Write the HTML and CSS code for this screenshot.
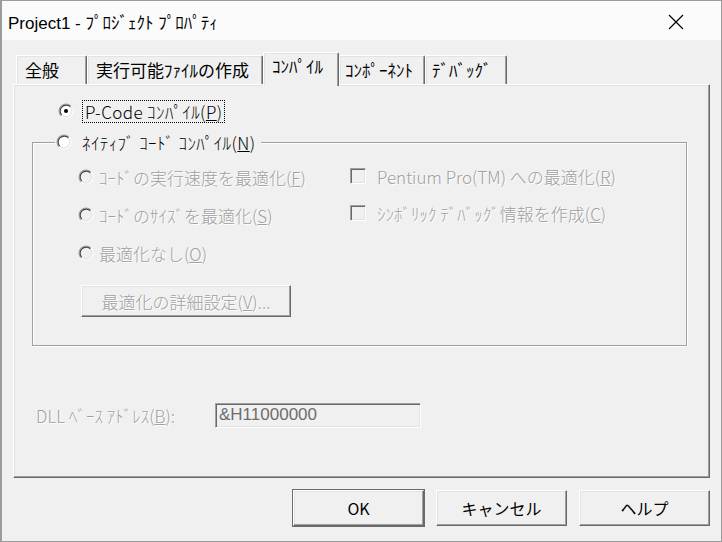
FILE: index.html
```html
<!DOCTYPE html>
<html lang="ja">

<head>
  <meta charset="UTF-8">
  <title>Project1 - ﾌﾟﾛｼﾞｪｸﾄ ﾌﾟﾛﾊﾟﾃｨ</title>
  <link rel="stylesheet" href="styles.css">
</head>

<body>
  <svg class="defs" width="0" height="0">
    <symbol id="radio-ring" viewBox="0 0 16 16">
      <path d="M3.05 12.95 A7 7 0 0 1 12.95 3.05" stroke="#a0a0a0" stroke-width="1.1" fill="none" />
      <path d="M12.95 3.05 A7 7 0 0 1 3.05 12.95" stroke="#fff" stroke-width="1.1" fill="none" />
      <path d="M3.76 12.24 A6 6 0 0 1 12.24 3.76" stroke="#404040" stroke-width="1.1" fill="none" />
      <path d="M12.24 3.76 A6 6 0 0 1 3.76 12.24" stroke="#e3e3e3" stroke-width="1.1" fill="none" />
    </symbol>
  </svg>

  <div class="window">
    <div class="titlebar">
      <span class="title">Project1 - ﾌﾟﾛｼﾞｪｸﾄ ﾌﾟﾛﾊﾟﾃｨ</span>
      <span class="close">
        <svg width="16" height="16" viewBox="0 0 16 16">
          <path d="M1 1 L15 15 M15 1 L1 15" stroke="#000" stroke-width="1.2" fill="none" />
        </svg>
      </span>
    </div>

    <div class="client">
      <div class="tabs">
        <div class="tab tab-general">全般</div>
        <div class="tab tab-make">実行可能ﾌｧｲﾙの作成</div>
        <div class="tab tab-compile active">ｺﾝﾊﾟｲﾙ</div>
        <div class="tab tab-component">ｺﾝﾎﾟｰﾈﾝﾄ</div>
        <div class="tab tab-debug">ﾃﾞﾊﾞｯｸﾞ</div>
      </div>

      <div class="panel">
        <div class="opt pcode">
          <svg class="radio" viewBox="0 0 16 16"><circle cx="8" cy="8" r="5.5" fill="#fff" /><use href="#radio-ring" /><circle cx="8" cy="8" r="2" fill="#000" /></svg>
          <span class="focus">P-Code ｺﾝﾊﾟｲﾙ(<u>P</u>)</span>
        </div>

        <div class="group">
          <div class="legend">
            <svg class="radio" viewBox="0 0 16 16"><circle cx="8" cy="8" r="5.5" fill="#fff" /><use href="#radio-ring" /></svg>
            <span>ﾈｲﾃｨﾌﾞ ｺｰﾄﾞ ｺﾝﾊﾟｲﾙ(<u>N</u>)</span>
          </div>
          <div class="group-cols">
            <div class="col-left">
              <div class="opt">
                <svg class="radio off" viewBox="0 0 16 16"><use href="#radio-ring" /></svg>
                <span class="dis">ｺｰﾄﾞの実行速度を最適化(<u>F</u>)</span>
              </div>
              <div class="opt">
                <svg class="radio off" viewBox="0 0 16 16"><use href="#radio-ring" /></svg>
                <span class="dis">ｺｰﾄﾞのｻｲｽﾞを最適化(<u>S</u>)</span>
              </div>
              <div class="opt">
                <svg class="radio off" viewBox="0 0 16 16"><use href="#radio-ring" /></svg>
                <span class="dis">最適化なし(<u>O</u>)</span>
              </div>
              <div class="btn btn-advanced dis">最適化の詳細設定(<u>V</u>)...</div>
            </div>
            <div class="col-right">
              <div class="opt"><span class="check"></span><span class="dis">Pentium Pro(TM) への最適化(<u>R</u>)</span></div>
              <div class="opt"><span class="check"></span><span class="dis">ｼﾝﾎﾞﾘｯｸ ﾃﾞﾊﾞｯｸﾞ情報を作成(<u>C</u>)</span></div>
            </div>
          </div>
        </div>

        <div class="dll-row">
          <span class="dll-label dis">DLL ﾍﾞｰｽ ｱﾄﾞﾚｽ(<u>B</u>):</span>
          <div class="field">&amp;H11000000</div>
        </div>
      </div>

      <div class="actions">
        <div class="btn push default">OK</div>
        <div class="btn push">キャンセル</div>
        <div class="btn push">ヘルプ</div>
      </div>
    </div>
  </div>
</body>

</html>
```

FILE: styles.css
```css
body {
  margin: 0;
  padding: 0;
  font-family: "Noto Sans CJK JP", sans-serif;
  font-size: 17px;
  font-weight: 300;
  color: #000;
}

.defs {
  position: absolute;
}

.window {
  width: 722px;
  height: 542px;
  box-sizing: border-box;
  border: 1px solid #9c9c9c;
  border-left-width: 2px;
  display: flex;
  flex-direction: column;
  background: #f0f0f0;
}

.titlebar {
  height: 39px;
  background: #fbfbfb;
  display: flex;
  align-items: center;
  justify-content: space-between;
  padding: 0 37px 0 6px;
}

.title {
  font-family: "Liberation Sans", "Noto Sans CJK JP", sans-serif;
  font-size: 17px;
  font-weight: 400;
  padding-top: 1px;
}

.close {
  display: flex;
  padding-top: 2px;
}

.client {
  flex: 1;
  padding: 12px 10px 0 11px;
}

/* tab strip */
.tabs {
  display: flex;
  align-items: flex-end;
  height: 32px;
  padding-left: 3px;
  position: relative;
  z-index: 1;
}

.tab {
  height: 29px;
  box-sizing: border-box;
  padding: 3px 0 0 8px;
  line-height: 22px;
  font-weight: 400;
  border-top: 1px solid #fff;
  border-left: 1px solid #fff;
  border-right: 1px solid #696969;
  box-shadow: inset -1px 0 0 #a0a0a0, inset 1px 1px 0 #e3e3e3;
  border-radius: 2px 2px 0 0;
}

.tab-general { width: 71px; }
.tab-make { width: 176px; }
.tab-compile { width: 76px; }
.tab-component { width: 86px; padding-left: 5px; }
.tab-debug { width: 82px; padding-left: 6px; }

.tab.active {
  height: 34px;
  margin-bottom: -2px;
  padding-top: 2px;
  background: #f0f0f0;
}

/* page */
.panel {
  width: 697px;
  height: 394px;
  box-sizing: border-box;
  border: 1px solid;
  border-color: #fff #696969 #696969 #fff;
  box-shadow: inset -1px -1px 0 #a0a0a0, inset 1px 1px 0 #e3e3e3;
  padding: 14px 0 0 18px;
}

.opt {
  display: flex;
  align-items: center;
  height: 24px;
  line-height: 21px;
  white-space: nowrap;
}

.pcode {
  margin-left: 26px;
}

.pcode .radio {
  margin-right: 9px;
}

.focus {
  outline: 1px dotted #000;
  padding: 0 2px 0 2px;
  letter-spacing: 0.4px;
}

.radio {
  width: 16px;
  height: 16px;
  flex: none;
}

.radio.off {
  margin-right: 5px;
}

.check {
  width: 16px;
  height: 16px;
  box-sizing: border-box;
  border: 1px solid;
  border-color: #a0a0a0 #fff #fff #a0a0a0;
  box-shadow: inset 1px 1px 0 #696969, inset -1px -1px 0 #e3e3e3;
  background: #f0f0f0;
  margin-right: 11px;
  flex: none;
}

.dis {
  color: #a0a0a0;
  text-shadow: 1px 1px 0 #fff;
}

/* native code group */
.group {
  position: relative;
  margin-top: 19px;
  width: 655px;
  height: 204px;
  box-sizing: border-box;
  border: 1px solid #a0a0a0;
  box-shadow: inset 1px 1px 0 #fff, 1px 1px 0 #fff;
  padding: 15px 0 0 45px;
}

.legend {
  position: absolute;
  top: -13px;
  left: 22px;
  display: flex;
  align-items: center;
  height: 24px;
  padding: 0 6px 0 1px;
  background: #f0f0f0;
  white-space: nowrap;
  letter-spacing: 0.4px;
}

.legend .radio {
  margin-right: 10px;
}

.group-cols {
  display: flex;
}

.col-left {
  width: 272px;
}

.col-left .opt,
.col-right .opt {
  height: 38px;
}

.col-right .opt {
  margin-top: -1px;
}

.btn {
  box-sizing: border-box;
  border: 1px solid;
  border-color: #fff #696969 #696969 #fff;
  box-shadow: inset -1px -1px 0 #a0a0a0, inset 1px 1px 0 #e3e3e3;
  display: flex;
  align-items: center;
  justify-content: center;
  white-space: nowrap;
}

.btn-advanced {
  margin: 13px 0 0 3px;
  width: 210px;
  height: 32px;
}

/* dll base address */
.dll-row {
  display: flex;
  align-items: center;
  margin-top: 57px;
  padding-left: 4px;
}

.dll-label {
  width: 179px;
}

.field {
  width: 206px;
  height: 25px;
  box-sizing: border-box;
  border: 1px solid;
  border-color: #a0a0a0 #fff #fff #a0a0a0;
  box-shadow: inset 1px 1px 0 #696969, inset -1px -1px 0 #e3e3e3;
  padding: 0 0 0 3px;
  line-height: 22px;
  color: #6d6d6d;
  font-family: "Liberation Sans", sans-serif;
  font-size: 17px;
  font-weight: 400;
}

/* dialog buttons */
.actions {
  display: flex;
  justify-content: flex-end;
  gap: 12px;
  margin-top: 12px;
  width: 697px;
}

.push {
  width: 131px;
  height: 36px;
  font-size: 16px;
  font-weight: 400;
}

.push.default {
  outline: 1px solid #6b6b6b;
}
```
